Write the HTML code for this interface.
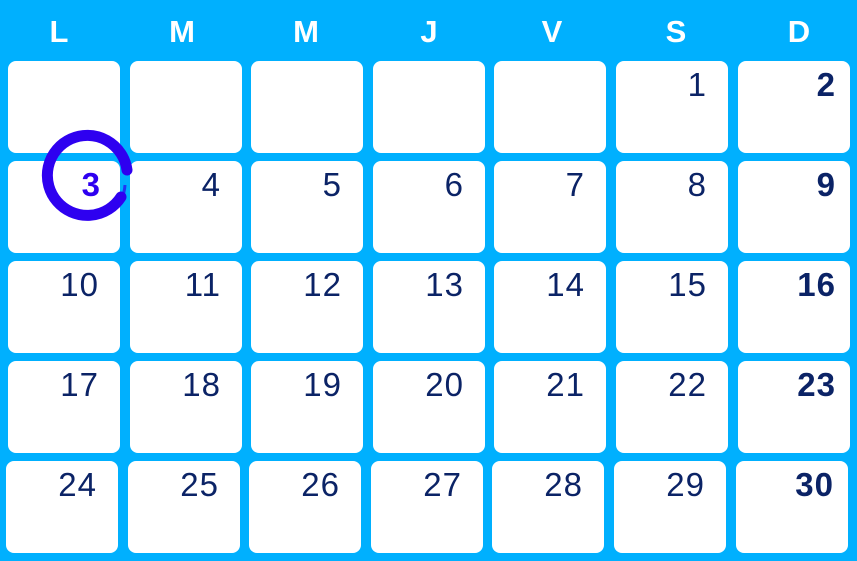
<!DOCTYPE html><html><head><style>
body{margin:0;width:857px;height:561px;background:#00b0fe;position:relative;overflow:hidden;font-family:"Liberation Sans",sans-serif}
.h{position:absolute;top:14px;width:60px;margin-left:-30px;text-align:center;color:#fff;font-weight:bold;font-size:31px}
.c{position:absolute;width:112px;height:92px;background:#fff;border-radius:8px}
.n{position:absolute;right:21px;top:6px;color:#0b2366;font-size:33px;line-height:36px;letter-spacing:1px}
.b{font-weight:bold;right:14px}
</style></head><body>
<div class="h" style="left:59px">L</div><div class="h" style="left:182px">M</div><div class="h" style="left:306px">M</div><div class="h" style="left:429px">J</div><div class="h" style="left:552px">V</div><div class="h" style="left:676px">S</div><div class="h" style="left:799px">D</div>
<div id="g"></div>
<script>
var xs=[8,130,251,373,494,616,738],ys=[61,161,261,361,461];
var nums=[["","","","","","1","2"],["3","4","5","6","7","8","9"],["10","11","12","13","14","15","16"],["17","18","19","20","21","22","23"],["24","25","26","27","28","29","30"]];
var h="";
for(var r=0;r<5;r++)for(var c=0;c<7;c++){var x=xs[c]-(r==4?2:0);
var t=nums[r][c];var cls="n"+(c==6?" b":"");var st="";
if(t=="3"){cls="n b";st="color:#2e00f0;right:19px;";}
h+='<div class="c" style="left:'+x+'px;top:'+ys[r]+'px"><div class="'+cls+'" style="'+st+'">'+t+'</div></div>';}
document.getElementById("g").innerHTML=h;
</script>
<svg style="position:absolute;left:0;top:0" width="857" height="561"><path d="M127 170 A40 40 0 1 0 121 197" fill="none" stroke="#2e00f0" stroke-width="11" stroke-linecap="round"/><path d="M125 185 Q124 200 114 207" fill="none" stroke="#2e00f0" stroke-width="3" opacity="0.7"/></svg>
</body></html>
